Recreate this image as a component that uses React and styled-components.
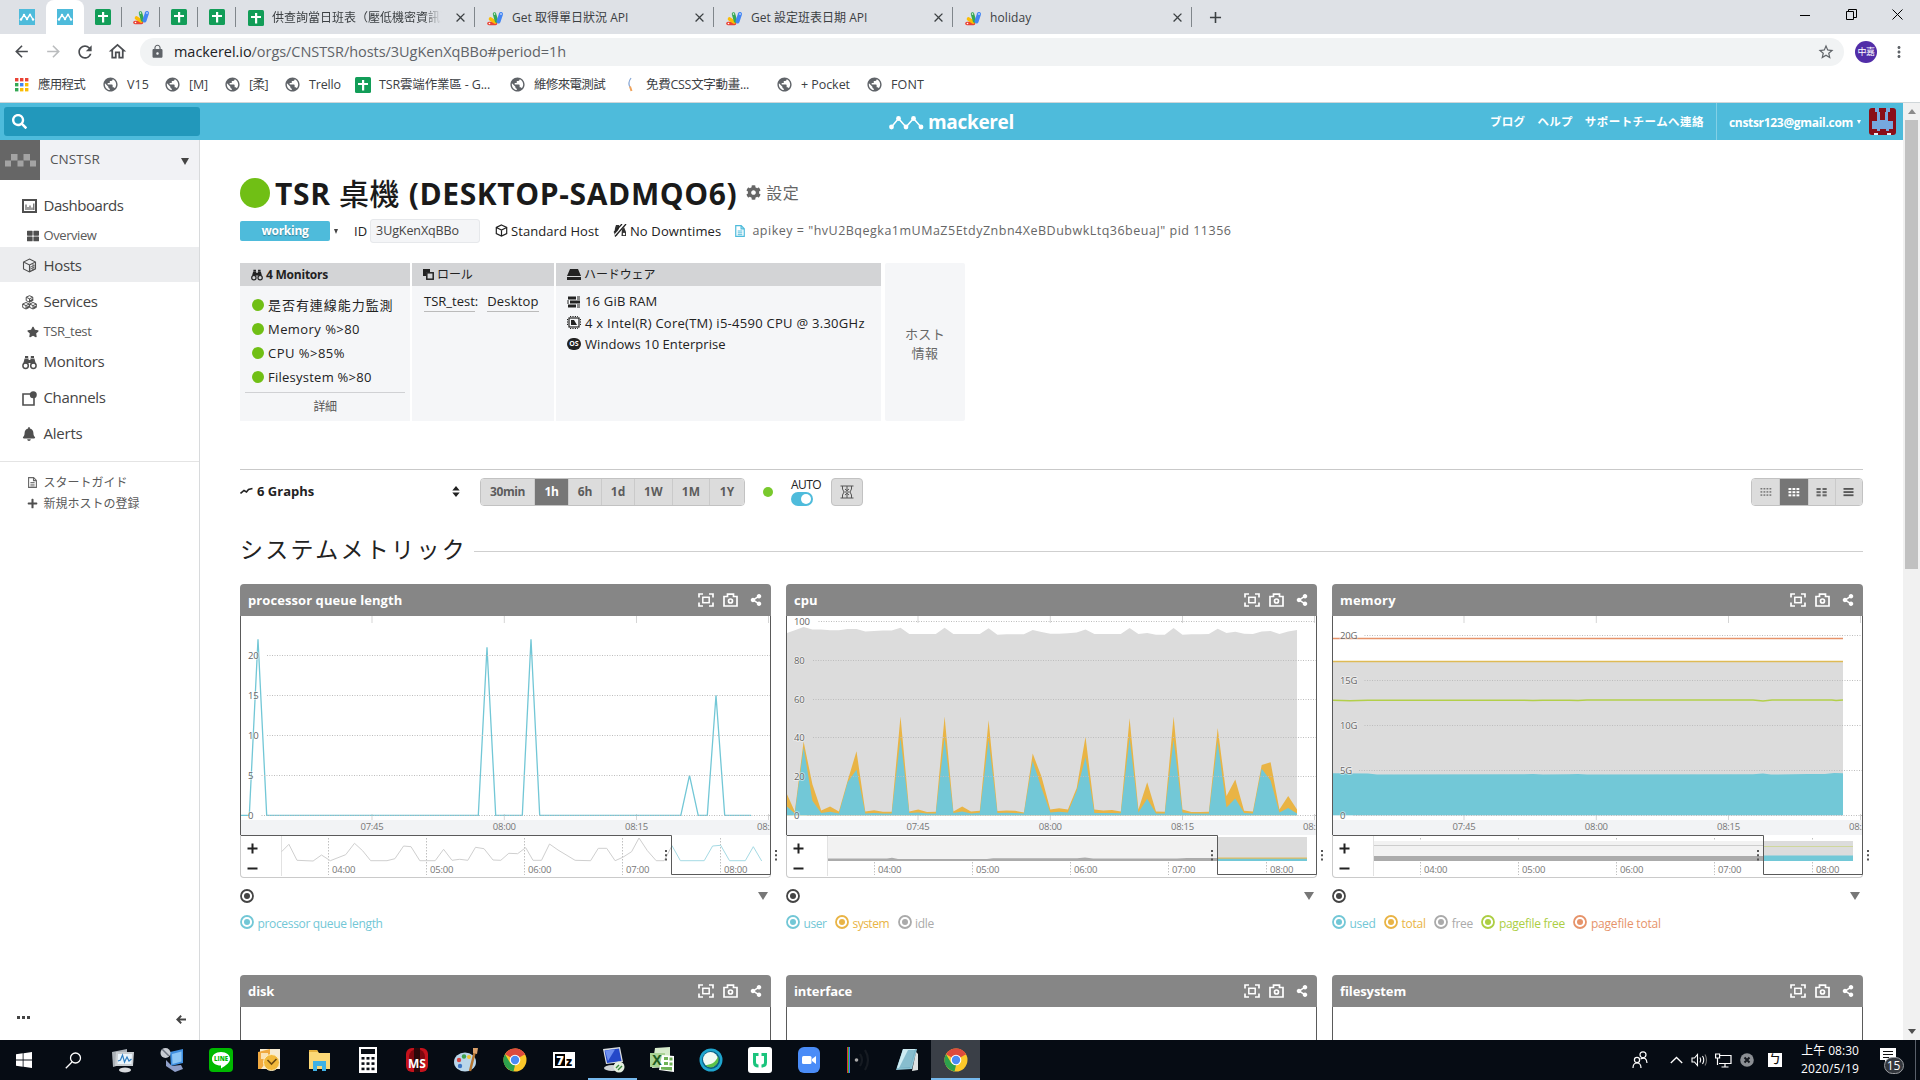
import React from "react";
import styled, { createGlobalStyle, css } from "styled-components";
import {
  MdPublic, MdArrowBack, MdArrowForward, MdRefresh, MdOutlineHome, MdLock,
  MdStarBorder, MdMoreVert, MdClose, MdAdd,
} from "react-icons/md";
import {
  FaCog, FaPlus, FaStar, FaBell, FaThLarge, FaShareAlt, FaSearch,
} from "react-icons/fa";

const Global = createGlobalStyle`
  * { box-sizing: border-box; }
  html, body { margin: 0; padding: 0; background: #fff; overflow: hidden; }
  body { font-family: "Open Sans", "Noto Sans CJK TC", sans-serif; font-size: 13px; color: #222; }
  svg { display: block; flex: none; }
`;

const Screen = styled.div`
  width: 1920px;
  height: 1080px;
  display: flex;
  flex-direction: column;
  overflow: hidden;
`;

const Text = styled.span`
  font-size: ${(p) => p.$size || 13}px;
  font-weight: ${(p) => p.$weight || 400};
  letter-spacing: ${(p) => p.$track || 0}px;
  color: ${(p) => p.$color || "inherit"};
  line-height: 1.3;
  white-space: nowrap;
`;

/* ---------- browser chrome ---------- */

const TabStrip = styled.div`
  height: 34px;
  flex: none;
  display: flex;
  background: #dee1e6;
  padding-left: 8px;
`;

const PinnedTab = styled.div`
  width: 38px;
  height: 34px;
  display: flex;
  align-items: center;
  justify-content: center;
  background: ${(p) => (p.$active ? "#fff" : "transparent")};
  border-radius: ${(p) => (p.$active ? "8px 8px 0 0" : 0)};
`;

const Divider = styled.span`
  width: 1px;
  height: 20px;
  margin: 7px 0 0 -1px;
  background: #80868b;
`;

const WideTab = styled.div`
  width: 239px;
  height: 34px;
  display: flex;
  align-items: center;
  padding: 1px 7px 0 12px;
  gap: 8px;
  color: #3c4043;
`;

const TabTitle = styled(Text)`
  flex: 1;
  overflow: hidden;
  ${(p) => p.$fade && css`
    mask-image: linear-gradient(90deg, #000 88%, transparent 98%);
  `}
`;

const NewTab = styled.div`
  width: 46px;
  display: flex;
  align-items: center;
  justify-content: center;
  color: #3c4043;
`;

const WindowButtons = styled.div`
  margin-left: auto;
  display: flex;
  height: 29px;
  align-items: center;
`;

const WindowButton = styled.div`
  width: 46px;
  display: flex;
  justify-content: center;
`;

const AddressBar = styled.div`
  height: 35px;
  flex: none;
  display: flex;
  align-items: center;
  padding-left: 5px;
  background: #fff;
  color: #5f6368;
`;

const NavButton = styled.div`
  width: 32px;
  display: flex;
  justify-content: center;
  color: ${(p) => (p.$dim ? "#babcbe" : "#4a4d51")};
`;

const Omnibox = styled.div`
  flex: 1;
  height: 28px;
  margin-left: 7px;
  padding: 0 9px 0 10px;
  display: flex;
  align-items: center;
  border-radius: 14px;
  background: #f1f3f4;
`;

const Url = styled(Text)`
  margin-left: 9px;
  padding-top: 1px;
  flex: 1;
  b { font-weight: 400; color: #202124; }
`;

const Profile = styled.div`
  width: 22px;
  height: 22px;
  margin: 0 13px 0 11px;
  border-radius: 50%;
  background: #512da8;
  color: #fff;
  display: flex;
  align-items: center;
  justify-content: center;
`;

const NavSpacer = styled.span`
  width: 12px;
`;

const Bookmarks = styled.div`
  height: 33px;
  flex: none;
  display: flex;
  align-items: center;
  padding: 0 0 2px 14px;
  background: #fff;
`;

const Bookmark = styled.div`
  width: ${(p) => p.$width}px;
  display: flex;
  align-items: center;
  gap: 8px;
  color: #3c4043;
  ${Text} { padding-top: 1px; }
`;

/* ---------- page ---------- */

const Viewport = styled.div`
  height: 938px;
  flex: none;
  display: flex;
  border-top: 1px solid #cfd6d9;
`;

const Page = styled.div`
  width: 1903px;
  display: flex;
  flex-direction: column;
`;

const ScrollTrack = styled.div`
  width: 17px;
  background: #f1f1f1;
  display: flex;
  flex-direction: column;
  align-items: center;
`;

const ScrollArrow = styled.div`
  height: 17px;
  display: flex;
  align-items: center;
`;

const ScrollThumb = styled.div`
  width: 13px;
  height: 449px;
  margin-bottom: auto;
  background: #c1c1c1;
`;

const Header = styled.header`
  height: 37px;
  flex: none;
  display: grid;
  grid-template-columns: 1fr auto 1fr;
  align-items: center;
  background: #4ebbdb;
  color: #fff;
`;

const SearchBox = styled.div`
  width: 196px;
  height: 29px;
  margin-left: 4px;
  padding-left: 8px;
  display: flex;
  align-items: center;
  border-radius: 3px;
  background: #2298bb;
`;

const Brand = styled.div`
  display: flex;
  align-items: center;
  gap: 4px;
  padding-top: 1px;
`;

const HeaderLinks = styled.div`
  height: 37px;
  display: flex;
  align-items: center;
  justify-content: flex-end;
  gap: 12px;
  padding-right: 7px;
  ${Text} { padding-top: 2px; }
`;

const Account = styled.div`
  height: 37px;
  display: flex;
  align-items: center;
  gap: 4px;
  padding-left: 12px;
  border-left: 1px solid #83d0e6;
`;

const Avatar = styled.div`
  margin-left: 4px;
  border-radius: 3px;
  overflow: hidden;
`;

const Body = styled.div`
  flex: 1;
  display: flex;
  min-height: 0;
`;

const Sidebar = styled.nav`
  width: 200px;
  flex: none;
  display: flex;
  flex-direction: column;
  border-right: 1px solid #d8dadc;
  color: #444;
`;

const OrgRow = styled.div`
  height: 40px;
  flex: none;
  display: flex;
  align-items: center;
  gap: 10px;
  padding-right: 10px;
  margin-bottom: 8px;
  background: #f1f2f5;
  color: #555;
`;

const OrgLogo = styled.div`
  width: 40px;
  height: 40px;
  background: #666;
  display: flex;
  align-items: center;
  justify-content: center;
`;

const Caret = styled.span`
  width: 0;
  height: 0;
  border: ${(p) => p.$w || 4}px solid transparent;
  border-top: ${(p) => p.$h || 7}px solid ${(p) => p.$color || "#444"};
  border-bottom: 0;
`;

const OrgCaret = styled(Caret)`
  margin-left: auto;
  margin-top: 3px;
`;

const NavItem = styled.div`
  height: ${(p) => p.$height || 36}px;
  flex: none;
  display: grid;
  grid-template-columns: 21.5px 1fr;
  align-items: center;
  padding-left: 22px;
  padding-top: ${(p) => p.$nudge || 0}px;
  background: ${(p) => (p.$active ? "#ecedef" : "transparent")};
  color: ${(p) => (p.$sub ? "#5a5a5a" : "#444")};
  > svg { color: #4f4f4f; justify-self: ${(p) => (p.$sub ? "center" : "start")}; }
`;

const NavLinks = styled.div`
  margin-top: 9px;
  padding-top: 10px;
  border-top: 1px solid #e4e4e4;
`;

const SidebarFooter = styled.div`
  margin-top: auto;
  height: 42px;
  padding: 0 13px 0 17px;
  display: flex;
  align-items: center;
  justify-content: space-between;
  color: #444;
`;

const Dots = styled.span`
  display: flex;
  gap: 2px;
  padding-bottom: 4px;
  i { width: 3px; height: 3px; background: #444; }
`;

const Main = styled.main`
  flex: 1;
  padding: 32px 40px 0 40px;
  display: flex;
  flex-direction: column;
  min-width: 0;
`;

const TitleRow = styled.div`
  height: 42px;
  flex: none;
  display: flex;
  align-items: center;
  gap: 5px;
  b { font-weight: 500; }
`;

const Status = styled.span`
  width: ${(p) => p.$size}px;
  height: ${(p) => p.$size}px;
  flex: none;
  border-radius: 50%;
  background: ${(p) => p.$color || "#70bf15"};
`;

const Settings = styled.div`
  display: flex;
  align-items: center;
  gap: 5px;
  margin-left: 4px;
  color: #666;
`;

const MetaRow = styled.div`
  height: 24px;
  flex: none;
  margin-top: 5px;
  display: flex;
  align-items: center;
`;

const Meta = styled.div`
  display: flex;
  align-items: center;
  gap: ${(p) => p.$gap || 3}px;
  margin-left: ${(p) => p.$left || 0}px;
`;

const Badge = styled.div`
  width: 90px;
  height: 20px;
  margin-right: 4px;
  display: flex;
  align-items: center;
  justify-content: center;
  border-radius: 2px;
  background: #4ebbdb;
  color: #fff;
  text-shadow: 0 1px 1px rgba(0, 0, 0, 0.3);
`;

const IdField = styled.div`
  width: 110px;
  height: 24px;
  padding-left: 5px;
  display: flex;
  align-items: center;
  border: 1px solid #e6e8eb;
  border-radius: 3px;
  background: #f4f5f7;
  color: #444;
`;

const InfoTable = styled.div`
  height: 158px;
  flex: none;
  margin-top: 20px;
  display: flex;
  gap: 2px;
`;

const InfoPanel = styled.section`
  width: ${(p) => p.$width}px;
  display: flex;
  flex-direction: column;
  background: #f5f6f8;
`;

const InfoHead = styled.div`
  height: 23px;
  flex: none;
  display: flex;
  align-items: center;
  gap: 3px;
  padding-left: 11px;
  background: #d3d4d6;
`;

const MonitorList = styled.div`
  padding: 7px 0 0 12px;
  flex: 1;
`;

const MonitorItem = styled.div`
  height: 24px;
  display: flex;
  align-items: center;
  gap: 4px;
`;

const Details = styled.div`
  height: 29px;
  margin: 0 5px;
  border-top: 1px solid #d0d1d4;
  display: flex;
  align-items: center;
  justify-content: center;
  color: #555;
`;

const Roles = styled.div`
  display: flex;
  padding: 7px 0 0 12px;
`;

const RoleLink = styled(Text)`
  height: 19px;
  border-bottom: 1px solid #bbb;
`;

const RoleColon = styled(Text)`
  margin-right: 9px;
`;

const Hardware = styled.div`
  padding: 5px 0 0 11px;
`;

const HardwareItem = styled.div`
  height: 21.3px;
  display: flex;
  align-items: center;
  gap: 4px;
`;

const HostInfo = styled.div`
  width: 80px;
  margin-left: 2px;
  padding-top: 4px;
  display: flex;
  flex-direction: column;
  align-items: center;
  justify-content: center;
  gap: 2px;
  border-radius: 2px;
  background: #f5f6f8;
  color: #666;
`;

const GraphBar = styled.div`
  height: 37px;
  flex: none;
  margin-top: 48px;
  padding-top: 7px;
  display: flex;
  align-items: center;
  border-top: 1px solid #c9c9c9;
`;

const GraphSelect = styled.div`
  width: 240px;
  display: flex;
  align-items: center;
  gap: 4px;
  padding-right: 20px;
  > :last-child { margin-left: auto; }
`;

const Group = styled.div`
  height: 28px;
  display: flex;
  border: 1px solid #c2c2c2;
  border-radius: 4px;
  overflow: hidden;
`;

const GroupButton = styled.div`
  width: ${(p) => p.$width}px;
  display: flex;
  align-items: center;
  justify-content: center;
  border-left: ${(p) => (p.$first ? 0 : "1px solid #cacaca")};
  background: ${(p) => (p.$active ? "#767676" : "#dcdcdc")};
  color: ${(p) => (p.$active ? "#fff" : "#5c5c5c")};
`;

const Auto = styled.div`
  width: 30px;
  display: flex;
  flex-direction: column;
  margin: 0 10px 0 18px;
`;

const Toggle = styled.div`
  width: 22px;
  height: 14px;
  padding: 2px;
  display: flex;
  justify-content: flex-end;
  border-radius: 7px;
  background: #4ebbdb;
  &::after { content: ""; width: 10px; height: 10px; border-radius: 50%; background: #fff; }
`;

const SquareButton = styled.div`
  width: 32px;
  height: 28px;
  display: flex;
  align-items: center;
  justify-content: center;
  border: 1px solid #c2c2c2;
  border-radius: 4px;
  background: #dcdcdc;
  margin-right: auto;
`;

const SectionTitle = styled.div`
  height: 40px;
  flex: none;
  margin-top: 24px;
  display: flex;
  align-items: center;
  gap: 7px;
  &::after { content: ""; flex: 1; height: 1px; background: #cfcfcf; margin-top: 2px; }
`;

const Cards = styled.div`
  margin-top: 14px;
  display: grid;
  grid-template-columns: repeat(3, 531px);
  column-gap: 15px;
  grid-auto-rows: 391px;
`;

const CardHead = styled.div`
  height: 32px;
  padding: 0 9px 0 8px;
  display: flex;
  align-items: center;
  border-radius: 4px 4px 0 0;
  background: #868686;
  color: #fff;
  ${Text} { flex: 1; }
`;

const HeadIcons = styled.div`
  display: flex;
  align-items: center;
  gap: 9px;
  > :last-child { margin-left: 3px; }
`;

const ChartFrame = styled.div`
  border: solid #5a5a5a;
  border-width: 0 1px;
  height: ${(p) => p.$height || 219}px;
`;

const Overview = styled.div`
  height: 43px;
  display: flex;
  border: solid #cacaca;
  border-width: 0 1px 1px;
  border-radius: 0 0 4px 4px;
`;

const ZoomButtons = styled.div`
  width: 40px;
  display: flex;
  flex-direction: column;
  padding: 7px 0 0 6px;
  gap: 8px;
  border-top: 1px solid #5a5a5a;
`;

const AllToggle = styled.div`
  height: 36px;
  padding: 0 3px 0 0;
  display: flex;
  align-items: center;
  justify-content: space-between;
`;

const Legend = styled.div`
  display: flex;
  gap: 8.5px;
  padding-top: 1px;
`;

const LegendItem = styled.div`
  display: flex;
  gap: 3.5px;
  color: ${(p) => p.$color};
  ${Text} { padding-top: 1px; }
`;

/* ---------- taskbar ---------- */

const Taskbar = styled.div`
  height: 40px;
  flex: none;
  display: flex;
  background: #060c14;
  color: #fff;
`;

const TaskSlot = styled.div`
  width: ${(p) => p.$width || 49}px;
  display: flex;
  align-items: center;
  justify-content: center;
  background: ${(p) => (p.$active ? "#3a3f47" : "transparent")};
  box-shadow: ${(p) => (p.$running ? "inset 0 -2px 0 #76b9ed" : "none")};
`;

const Tray = styled.div`
  margin-left: auto;
  display: flex;
  align-items: center;
`;

const TrayItem = styled.div`
  width: ${(p) => p.$width}px;
  display: flex;
  align-items: center;
  justify-content: center;
`;

const Clock = styled.div`
  width: 76px;
  display: flex;
  flex-direction: column;
  align-items: center;
  gap: 2px;
`;

const PeekLine = styled.div`
  width: 5px;
  height: 40px;
  border-left: 1px solid #59606a;
`;

const ImeBadge = styled.span`
  width: 14px;
  height: 14px;
  background: #fff;
  color: #111;
  font-size: 12px;
  font-weight: 500;
  line-height: 14px;
  text-align: center;
`;

const Notice = styled.div`
  position: relative;
  width: 26px;
  height: 26px;
  padding: 1px 0 0 1px;
`;

const Count = styled.span`
  position: absolute;
  left: 5px;
  top: 10px;
  width: 20px;
  height: 17px;
  border: 1px solid #9a9da1;
  border-radius: 9px;
  background: #33373d;
  font-size: 12px;
  line-height: 15px;
  text-align: center;
`;

/* ---------- icons ---------- */

const MackerelFav = () => (
  <svg width="16" height="16" viewBox="0 0 16 16">
    <rect width="16" height="16" fill="#4ebbdb" />
    <path d="M2 10.500 5 6l3 4 3-4.500 3 5" fill="none" stroke="#fff" strokeWidth="1.400" />
    <g fill="#fff"><circle cx="2" cy="10.500" r="1.200" /><circle cx="5" cy="6" r="1.200" /><circle cx="8" cy="10" r="1.200" /><circle cx="11" cy="6" r="1.200" /><circle cx="14" cy="10.500" r="1.200" /></g>
  </svg>
);

const SheetFav = () => (
  <svg width="16" height="16" viewBox="0 0 16 16">
    <rect width="16" height="16" rx="1.500" fill="#129d58" />
    <path d="M7 3h2.200v3H13v2H9.200v5.500H7V8H3V6h4z" fill="#fff" />
  </svg>
);

const ScriptFav = () => (
  <svg width="17" height="16" viewBox="0 0 17 16">
    <path d="M2 13.500H8.500" stroke="#ea4335" strokeWidth="3.600" strokeLinecap="round" />
    <path d="M3.500 9 8 12" stroke="#fbbc04" strokeWidth="3.600" strokeLinecap="round" />
    <path d="M7.500 4 9.500 11" stroke="#34a853" strokeWidth="3.400" strokeLinecap="round" />
    <path d="M14 4 11.500 11.500" stroke="#4285f4" strokeWidth="4" strokeLinecap="round" />
    <circle cx="7.500" cy="4" r=".8" fill="#fff" /><circle cx="14" cy="4" r=".8" fill="#fff" /><circle cx="2.500" cy="13.500" r=".8" fill="#fff" />
  </svg>
);

const appColors = ["#ea4335", "#ea4335", "#ea4335", "#34a853", "#4285f4", "#fbbc04", "#34a853", "#fbbc04", "#fbbc04"];
const AppsIcon = () => (
  <svg width="16" height="16" viewBox="0 0 16 16">
    {appColors.map((c, i) => (
      <rect key={i} x={1 + (i % 3) * 5} y={1 + Math.floor(i / 3) * 5} width="3.400" height="3.400" fill={c} />
    ))}
  </svg>
);

const FeatherFav = () => (
  <svg width="16" height="16" viewBox="0 0 16 16">
    <path d="M9 1 Q5.500 6 8 10" fill="none" stroke="#8aa9d6" strokeWidth="1.300" />
    <path d="M8 9.500 9.500 14" stroke="#f0a35a" strokeWidth="2" />
  </svg>
);

const Identicon = () => (
  <svg width="27" height="27" viewBox="0 0 27 27">
    <rect width="27" height="27" fill="#8a0f18" />
    <path d="M6 0h4v4h1v8h5V4h1V0h4v4h-2v9h5v8h-4v2h-3v-2h-6v2H8v-2H3v-8h5V4H6z" fill="#76a8de" />
    <path d="M5 25h4v2H5zM18 25h4v2h-4z" fill="#e8eef5" />
  </svg>
);

const BrandMark = () => (
  <svg width="35" height="16" viewBox="0 0 35 16">
    <path d="M2.500 13 9.500 4.500 17 13 24.500 4.500 32 13" fill="none" stroke="#fff" strokeWidth="1.500" />
    <g fill="#fff"><circle cx="2.500" cy="13" r="2.400" /><circle cx="9.500" cy="4.500" r="2.400" /><circle cx="17" cy="13" r="2.400" /><circle cx="24.500" cy="4.500" r="2.400" /><circle cx="32" cy="13" r="2.400" /></g>
  </svg>
);

const OrgMark = () => (
  <svg width="31" height="13" viewBox="0 0 31 13" fill="#a3a3a3">
    <rect x="0" y="6.500" width="6" height="6" /><rect x="6" y="0" width="6.500" height="6.500" />
    <rect x="12.500" y="6.500" width="6" height="6" /><rect x="18.500" y="0" width="6.500" height="6.500" />
    <rect x="25" y="6.500" width="6" height="6" />
  </svg>
);

const DashboardIcon = () => (
  <svg width="15" height="14" viewBox="0 0 15 14">
    <path d="M1 1h13v12H1z" fill="none" stroke="currentColor" strokeWidth="2" />
    <path d="M4 11V5.500M6 11V8M8 11V6.500M10 11V8.500M11.800 11V4.500" stroke="currentColor" strokeWidth="1.100" />
  </svg>
);

const HostIcon = () => (
  <svg width="15" height="15" viewBox="0 0 15 15" fill="none" stroke="currentColor">
    <path d="M7.500 1 13.500 4v7l-6 3-6-3V4zM1.500 4l6 3 6-3M7.500 7v7" strokeWidth="1.100" />
    <path d="M8 9.300 13 7M8 11.200 13 8.800M8 13 13 10.700M11 6v6.500" strokeWidth=".8" />
  </svg>
);

const CubeIcon = () => (
  <svg width="13" height="13" viewBox="0 0 13 13" fill="none" stroke="currentColor" strokeWidth="1.200">
    <path d="M6.500 1 11.700 3.500v6L6.500 12 1.300 9.500v-6zM1.300 3.500 6.500 6l5.200-2.500M6.500 6v6" />
  </svg>
);

const cube = (x, y) => `M${x} ${y}l3.300 1.500v3.400l-3.300 1.600-3.300-1.600v-3.400zM${x - 3.3} ${y + 1.5}l3.300 1.600 3.300-1.600M${x} ${y + 3.1}v3.400`;
const ServicesIcon = () => (
  <svg width="15" height="15" viewBox="0 0 15 15" fill="none" stroke="currentColor" strokeWidth="1">
    <path d={cube(7.5, 0.7) + cube(4, 7.5) + cube(11, 7.5)} />
    <path d="M8 6l3-1.500M4.500 12.800 7 11.500M11.500 12.800 14 11.500" strokeWidth="1.600" />
  </svg>
);

const BinocularIcon = ({ size = 15 }) => (
  <svg width={size} height={size} viewBox="0 0 15 15">
    <path d="M3 1h3.200v2H3zM8.800 1H12v2H8.800zM2.600 3.500h4v5H1.300zM8.400 3.500h4l1.300 5H8.400zM6 5h3v3H6z" fill="currentColor" />
    <circle cx="3.600" cy="10.800" r="2.700" fill="none" stroke="currentColor" strokeWidth="1.500" />
    <circle cx="11.400" cy="10.800" r="2.700" fill="none" stroke="currentColor" strokeWidth="1.500" />
  </svg>
);

const ChannelIcon = () => (
  <svg width="15" height="15" viewBox="0 0 15 15">
    <path d="M1 3h11v11H1z" fill="none" stroke="currentColor" strokeWidth="1.600" />
    <circle cx="11.300" cy="3.700" r="3.500" fill="currentColor" />
  </svg>
);

const BackArrow = () => (
  <svg width="10" height="9" viewBox="0 0 10 9">
    <path d="M10 4.500H2.500M5.200.700 1.300 4.500l3.900 3.800" fill="none" stroke="currentColor" strokeWidth="1.900" />
  </svg>
);

const DocIcon = ({ color = "#666", w = 9, h = 11 }) => (
  <svg width={w} height={h} viewBox="0 0 9 11" fill="none" stroke={color}>
    <path d="M.6.600h5l2.800 2.800v7H.6zM5.500.600v3h3" strokeWidth="1.100" />
    <path d="M2.400 5.500h4.200M2.400 7.200h4.200M2.400 8.900h4.200" strokeWidth=".9" />
  </svg>
);

const NoDowntimeIcon = () => (
  <svg width="14" height="13" viewBox="0 0 14 13">
    <path d="M3 1h3v3l-2 8H1L2 4zM9 3h2l2 5v4H8.500z" fill="#333" />
    <circle cx="11" cy="10" r="1.200" fill="#fff" />
    <path d="M12.500 0 1.500 12" stroke="#fff" strokeWidth="2.400" />
    <path d="M13 0 2 12.500M9 0 1 8.500" stroke="#222" strokeWidth="1.300" />
  </svg>
);

const RoleIcon = () => (
  <svg width="11" height="11" viewBox="0 0 11 11">
    <path d="M0 0h7v3H3v4H0z" fill="#222" />
    <rect x="3.800" y="3.800" width="6.400" height="6.400" fill="none" stroke="#222" strokeWidth="1.500" />
  </svg>
);

const DriveIcon = () => (
  <svg width="14" height="11" viewBox="0 0 14 11">
    <path d="M3 0h8l3 7H0zM0 8h14v3H0z" fill="#222" />
  </svg>
);

const RamIcon = () => (
  <svg width="14" height="12" viewBox="0 0 14 12">
    <path d="M1 .500h8v3h-8zM3 4.500h10v3H3zM1 8.500h8v3h-8z" fill="#222" />
    <path d="M10 1h3M10 3h3M10 9h3M10 11h3M0 5h2M0 7h2" stroke="#222" />
  </svg>
);

const CpuIcon = () => (
  <svg width="14" height="13" viewBox="0 0 14 13">
    <rect x="2" y="2" width="10" height="9" fill="none" stroke="#222" strokeWidth="1.200" />
    <path d="M4 4h3l3 5H4z" fill="#222" />
    <path d="M3 .500h8M3 12.500h8M.500 3v7M13.500 3v7" stroke="#222" strokeDasharray="1.200 1.200" />
  </svg>
);

const OsBadge = styled.span`
  width: 14px;
  height: 12px;
  border-radius: 6px;
  background: #222;
  color: #fff;
  font-size: 7px;
  font-weight: 700;
  line-height: 12px;
  text-align: center;
`;

const WaveIcon = () => (
  <svg width="13" height="8" viewBox="0 0 13 8">
    <path d="M.500 6.500 4 3.500 6.500 5 8.500 2.500 12.500 1.500" fill="none" stroke="#222" strokeWidth="1.600" />
  </svg>
);

const SortIcon = () => (
  <svg width="8" height="11" viewBox="0 0 8 11"><path d="M4 0l3.700 4.500H.3zM4 11 .3 6.500h7.400z" fill="#222" /></svg>
);

const RangeIcon = () => (
  <svg width="14" height="14" viewBox="0 0 14 14" fill="none" stroke="#555">
    <path d="M.500 1h13M.500 13h13M2.500 1v3l1.500 3-1.500 3v3M11.500 1v3L10 7l1.500 3v3M4.500 7h5" />
    <path d="M7 1v4.500M5 4l2 1.800L9 4M7 13V8.500M5 10l2-1.800L9 10" />
  </svg>
);

const GridIcon = ({ cols, rows = 3, w, color }) => (
  <svg width="12" height="10" viewBox="0 0 12 10" fill={color}>
    {Array.from({ length: cols * rows }, (_, i) => (
      <rect key={i} x={0.5 + (i % cols) * (12 / cols)} y={1 + Math.floor(i / cols) * (9.5 / rows)} width={w} height={cols === 1 ? 1.8 : cols === 4 ? 1.5 : 2} />
    ))}
  </svg>
);

const ExpandIcon = () => (
  <svg width="16" height="14" viewBox="0 0 16 14" fill="none" stroke="#fff" strokeWidth="1.700">
    <path d="M1 4.500V1h4M11 1h4v3.500M15 9.500V13h-4M5 13H1V9.500" />
    <rect x="4.800" y="4.300" width="6.400" height="5.400" strokeWidth="1.500" />
  </svg>
);

const CameraIcon = () => (
  <svg width="15" height="14" viewBox="0 0 15 14" fill="none" stroke="#fff" strokeWidth="1.700">
    <path d="M1 3.500h3.500V1.200h6v2.300H14V13H1z" /><circle cx="7.500" cy="8" r="2" />
  </svg>
);

const Radio = ({ color }) => (
  <svg width="14" height="14" viewBox="0 0 14 14">
    <circle cx="7" cy="7" r="6" fill="none" stroke={color} strokeWidth="1.800" />
    <circle cx="7" cy="7" r="3" fill={color} />
  </svg>
);

const CardTools = () => (
  <HeadIcons><ExpandIcon /><CameraIcon /><FaShareAlt size={12} /></HeadIcons>
);

const NoteGlyph = () => (
  <svg width="16" height="16"><path d="M0 0h16v12h-7l-4 4v-4H0z" fill="#fff" /><path d="M3 3.500h10M3 6.500h10M3 9.500h6" stroke="#111" /></svg>
);

/* ---------- charts ---------- */

const W = 529;
const minute = 8.81;
const timeTicks = [["07:45", 131], ["08:00", 263.3], ["08:15", 395.5], ["08:30", 527.5]];
const pts = (list) => list.map(([x, y]) => `${x.toFixed(1)},${y.toFixed(1)}`).join(" ");

function MainChart({ labels, children }) {
  return (
    <ChartFrame>
      <svg width={W} height="219" fontSize="9.5" fontFamily="Open Sans, sans-serif">
        {timeTicks.map(([t, x]) => (
          <path key={t} d={`M${x} 0v7M${x} 198v6`} stroke="#d5d5d5" />
        ))}
        {children}
        {labels.map(([t, y]) => (
          <g key={t}>
            <line x1={13 + t.length * 5.5 + 2} x2={W} y1={y} y2={y} stroke="#bdbdbd" strokeDasharray="1 1.500" />
            <text x="7" y={y + 3} letterSpacing="-.2" fill="#666" stroke="#fff" strokeOpacity=".55" strokeWidth="1.500" paintOrder="stroke">{t}</text>
          </g>
        ))}
        <rect x="0" y="204" width={W} height="15" fill="#f2f3f5" />
        {timeTicks.map(([t, x]) => (
          <text key={t} x={x} y="214" textAnchor="middle" letterSpacing="-.25" fill="#777">{t}</text>
        ))}
      </svg>
    </ChartFrame>
  );
}

const hourTicks = [["04:00", 47.5], ["05:00", 145.5], ["06:00", 243.5], ["07:00", 341.5], ["08:00", 439.5]];

const OverviewSvg = styled.svg`
  overflow: visible;
`;

function OverviewChart({ children, tickFrom = 3 }) {
  return (
    <Overview>
      <ZoomButtons>
        <svg width="11" height="11" viewBox="0 0 11 11"><path d="M5.500.500v10M.500 5.500h10" stroke="#222" strokeWidth="2" /></svg>
        <svg width="11" height="11" viewBox="0 0 11 11"><path d="M.500 6.500h10" stroke="#222" strokeWidth="2" /></svg>
      </ZoomButtons>
      <OverviewSvg width="489" height="42" fontSize="9.5" fontFamily="Open Sans, sans-serif">
        <path d="M.500 1v40" stroke="#e2e2e2" />
        {hourTicks.map(([t, x]) => (
          <path key={t} d={`M${x} ${tickFrom}V40`} stroke="#c0c0c0" strokeDasharray="1.500 1.500" />
        ))}
        {children}
        {hourTicks.map(([t, x]) => (
          <text key={t} x={x + 3.5} y="37.5" letterSpacing="-.2" fill="#777">{t}</text>
        ))}
        <path d="M0 .500H390.500V39.500H489.500V0" fill="none" stroke="#5a5a5a" />
        <path d="M385 15v12M495 15v12" stroke="#555" strokeWidth="2" strokeDasharray="2 2.200" />
      </OverviewSvg>
    </Overview>
  );
}

const queueSpikes = [[17, 22], [246, 21], [290, 22], [448.5, 5], [475, 15]];
const queueLine = [
  [0, 199.3],
  ...queueSpikes.flatMap(([x, v]) => [[x - 8.7, 199.3], [x, 199.3 - v * 8], [x + 8.7, 199.3]]),
  [510, 199.3],
];

const sparkPast = [
  [0.6, 16.7], [7.9, 9.3], [16, 25.3], [32.1, 26], [40.5, 20], [49.3, 25.7], [64.7, 19.7], [73.5, 8.3], [81.6, 15.7],
  [89.7, 25.7], [106, 25.7], [113.9, 23.7], [122.6, 11], [130, 11.7], [138.8, 25.7], [154.2, 25.7], [162.6, 14.3],
  [171, 25.3], [178.7, 24.3], [186.8, 25.3], [194.5, 12.3], [203, 13.7], [212, 25], [219.8, 25.3], [227.8, 18.3],
  [236.6, 18.7], [244.7, 12.7], [252, 25.3], [260.5, 25.3], [268.5, 9], [277, 15], [294.1, 25.3], [309.6, 25.7],
  [317.3, 13.3], [325.7, 13.3], [334.1, 25.7], [341.8, 22.3], [350.6, 16.7], [358, 3], [366.4, 15.7], [375.2, 25.7],
  [383.2, 25.7], [391, 10.7],
];
const sparkNow = [
  [391, 10.7], [399.4, 25.7], [423.2, 25.7], [431.6, 11], [439.7, 10.3], [448.5, 25.7], [464.3, 25.7], [472.3, 11.7], [480.7, 26],
];

const cpuUser = [5, 1, 35, 7.5, 1.2, 1.8, 1, 17, 23.5, 1, 1.2, 1, 1, 40, 1.2, 1.5, 1, 1, 40, 1.2, 2, 1, 1.3, 39, 1.2, 1.3, 1.2, 1, 28, 14, 1.5, 1.8, 1.5, 12.5, 30, 1.2, 1.2, 1.2, 1.1, 40, 1.5, 8.5, 1, 1, 39, 1.5, 1, 1, 1, 38, 4, 8.7, 1.2, 1, 24, 18, 1.5, 3.7, 1];
const cpuSystem = [12, 2, 38, 16, 2.4, 4.5, 2, 18, 33, 2, 2.6, 1.8, 1.8, 51, 2, 3, 1.7, 1.8, 51, 2, 4.5, 2, 2.3, 49, 2.2, 2.4, 2.3, 1.5, 31.8, 20, 3, 3.6, 3, 14, 40.5, 3, 2.5, 2.7, 2, 50, 3, 17, 2, 1.8, 51, 3, 1.7, 1.7, 1.8, 45, 10, 18.5, 2.3, 2, 26, 27.3, 3, 10, 3];
const cpuIdle = [93.8, 95.4, 97.1, 95.7, 95.7, 95.4, 95.4, 96, 96.1, 94.8, 95, 95.2, 95.2, 96.7, 93.5, 93.5, 93.5, 93.5, 96.7, 93.5, 93.5, 93.5, 93.5, 96.4, 93.1, 93.3, 93.3, 93.3, 95.5, 94.5, 93.6, 93.6, 93.8, 94.3, 95.7, 93.5, 93.5, 93.5, 93.5, 96.6, 93.5, 94, 93.1, 93.1, 96.5, 93.1, 93.3, 93.3, 93.5, 96.2, 94, 94.6, 93.6, 93.5, 94.8, 95, 93.5, 94.7, 95.5];
const cpuArea = (vals) => pts([[-1, 199.3], ...vals.map((v, i) => [i * minute - 1, 199.3 - v * 1.94]), [58 * minute - 1, 199.3]]);

const charts = [
  {
    title: "processor queue length",
    track: 0.08,
    main: (
      <MainChart labels={[["20", 39.5], ["15", 79.5], ["10", 119.5], ["5", 159.5], ["0", 199.5]]}>
        <polyline points={pts(queueLine)} fill="none" stroke="#72c7d6" strokeWidth="1.300" />
      </MainChart>
    ),
    overview: (
      <OverviewChart>
        <polyline points={pts(sparkPast)} fill="none" stroke="#cfcfcf" />
        <polyline points={pts(sparkNow)} fill="none" stroke="#a5dae4" />
      </OverviewChart>
    ),
    legend: [["processor queue length", "#72c7d6", -0.34]],
  },
  {
    title: "cpu",
    main: (
      <MainChart labels={[["100", 5.5], ["80", 44.5], ["60", 83.5], ["40", 121.5], ["20", 160.5], ["0", 199.5]]}>
        <polygon points={cpuArea(cpuIdle)} fill="#dcdcdc" />
        <polygon points={cpuArea(cpuSystem)} fill="#e9b445" />
        <polygon points={cpuArea(cpuUser)} fill="#72c8d7" />
      </MainChart>
    ),
    overview: (
      <OverviewChart tickFrom={27}>
        <rect x="1" y="2" width="389" height="24" fill="#f2f2f2" />
        <path d="M1 23.500H60l5-.800 6 1.300H160l6-.800H250l8-.600 8 .900H350l10-.600H390V26H1z" fill="#ababab" />
        <rect x="390" y="2" width="90" height="24" fill="#dcdcdc" />
        <path d="M390 22.500H480V26H390z" fill="#e0bc62" />
        <path d="M390 23.700H480V26H390z" fill="#72c8d7" />
      </OverviewChart>
    ),
    legend: [["user", "#72c7d6", -0.45], ["system", "#e9b445", -0.5], ["idle", "#aaaaaa", -0.3]],
  },
  {
    title: "memory",
    track: 0.2,
    main: (
      <MainChart labels={[["20G", 19.5], ["15G", 64.5], ["10G", 109.5], ["5G", 154.5], ["0", 199.5]]}>
        <rect x="0" y="45" width="510" height="154.300" fill="#dcdcdc" />
        <polygon points="0,157.3 35,157.6 44,158.6 190,158.300 200,158 210,158.500 236,158.300 245,157.900 254,158.500 420,158.300 430,157.600 438,158.500 475,158 492,158 501,157 510,157.300 510,199.3 0,199.3" fill="#72c8d7" />
        <path d="M0 22.500H510" stroke="#e6936a" strokeWidth="1.300" />
        <path d="M0 45.500H510" stroke="#deba55" strokeWidth="1.500" />
        <path d="M0 84.300 17 84.800 35 84.200H190l10 .400 10-.400h26l9 .400 9-.600H420l10 1 9-.900h60l4 .500 7-.500" fill="none" stroke="#b3cf4a" strokeWidth="1.500" />
      </MainChart>
    ),
    overview: (
      <OverviewChart>
        <rect x="1" y="6" width="389" height="20" fill="#f2f2f2" />
        <path d="M1 10.500H390" stroke="#cdcdcd" />
        <rect x="1" y="21" width="389" height="5" fill="#ababab" />
        <rect x="390" y="6" width="90" height="20" fill="#dcdcdc" />
        <path d="M390 11.500H480" stroke="#cfd79b" />
        <rect x="390" y="20.500" width="90" height="5.500" fill="#72c8d7" />
      </OverviewChart>
    ),
    legend: [["used", "#72c7d6", -0.3], ["total", "#e9b445", -0.25], ["free", "#aaaaaa", -0.3], ["pagefile free", "#acce43", -0.28], ["pagefile total", "#e6936a", -0.2]],
  },
];

/* ---------- taskbar drawings ---------- */

const Chrome = () => (
  <svg width="24" height="24" viewBox="0 0 24 24">
    <circle cx="12" cy="12" r="11.500" fill="#fbc829" />
    <path d="M12 12 2 6.200A11.500 11.500 0 0 1 22 6.200z" fill="#dd4b3e" />
    <path d="M12 .500a11.500 11.500 0 0 1 10 6H12z" fill="#dd4b3e" />
    <path d="M2 6.200 7.200 15 12 17.200 10.500 23.400A11.500 11.500 0 0 1 2 6.200z" fill="#2da14c" />
    <circle cx="12" cy="12" r="5.300" fill="#fff" /><circle cx="12" cy="12" r="4.200" fill="#4b8bf5" />
  </svg>
);

const art = {
  perf: (
    <><path d="M2 5l15-3v14l-14 4z" fill="#aab1b7" /><path d="M6 5h18l-1 14H5z" fill="#c9ced2" /><path d="M8 7h14l-.5 10H7.500z" fill="#eaf4fb" /><path d="M8 14 10.500 13 12.500 8 14.500 15 17 10 19 14 21.500 12" fill="none" stroke="#2f7fc2" strokeWidth="1.200" /><ellipse cx="15" cy="23" rx="6" ry="2.500" fill="#d7dadd" /></>
  ),
  remote: (
    <><path d="M11 5 24 2v14l-12 3z" fill="#3f8fe0" /><path d="M13 7 22.500 4.500v10L13.500 17z" fill="#8cc6f5" /><circle cx="6.500" cy="6" r="5" fill="#c8ccd2" /><path d="M3 2l7 7" stroke="#6e7580" strokeWidth="1.500" /><path d="M7 13l6 6 9-1 2 4-8 3-9-6z" fill="#8f9fc9" /></>
  ),
  outlook: (
    <><path d="M3 2h20v20H3z" fill="#f7ecd2" /><path d="M1 5l12-3v8L4 22H1z" fill="#f0a940" /><path d="M4 6h7v6H4z" fill="#fbe3b4" /><circle cx="14.500" cy="15.500" r="8" fill="#f2b93b" stroke="#fff0c4" /><path d="M10.500 13l4 4 5-5" fill="none" stroke="#6d4a10" strokeWidth="1.600" /></>
  ),
  folder: (
    <><path d="M3 3h8l2 3h11v16H3z" fill="#fbd876" /><path d="M3 3h8l1 2H3z" fill="#e6b23e" /><path d="M7 24V14h13v10h-4v-5h-5v5z" fill="#3fb1e4" /></>
  ),
  calc: (
    <><rect x="4" y="0" width="18" height="26" fill="#fff" /><rect x="6" y="2" width="14" height="5" fill="#0a0f17" />{[0, 1, 2, 3, 4, 5, 6, 7, 8].map((i) => (<rect key={i} x={6.5 + (i % 3) * 5} y={10 + Math.floor(i / 3) * 5.3} width="3" height="2.600" fill="#0a0f17" />))}</>
  ),
  ms: (
    <><rect x="2" y="1" width="22" height="24" rx="6" fill="#c4121c" /><circle cx="13" cy="10" r="8" fill="#7d080f" /><rect x="10" y="1" width="6" height="24" fill="#2a0709" /><text x="13" y="20.500" textAnchor="middle" fontSize="12" fontWeight="700" fill="#fff">MS</text></>
  ),
  paint: (
    <><ellipse cx="12" cy="15" rx="11" ry="9.500" fill="#b9d6ea" /><circle cx="6" cy="13" r="2.200" fill="#d64541" /><circle cx="11" cy="9.500" r="2.200" fill="#3fa34d" /><circle cx="16" cy="10" r="2" fill="#f2c430" /><circle cx="7" cy="19" r="2.200" fill="#3a74c4" /><path d="M22 4 17 24" stroke="#b5752f" strokeWidth="2.400" /><path d="M20 1l5 0-1 6-4-1z" fill="#d9a06a" /></>
  ),
  pc: (
    <><path d="M3 2l17-2 3 15-17 2z" fill="#d9dde2" /><path d="M4.500 3.500 19 1.500 21.500 14 7 16z" fill="#2448c9" /><path d="M5 3.500 15 2.500 8 14z" fill="#6d8ff0" /><ellipse cx="12" cy="21" rx="8" ry="3" fill="#cfd3d6" /><circle cx="19" cy="20" r="5.500" fill="#e5efe0" /><path d="M16 21l3-3M18 23l4-4" stroke="#3a8a3a" strokeWidth="1.400" /></>
  ),
  excel: (
    <><path d="M6 1l15-1v20l-18 1z" fill="#d6ebcb" /><path d="M1 6h15v14H1z" fill="#a9d394" /><path d="M13 8l12 1v16l-15-2z" fill="#fff" /><path d="M15 10h4v3h-4zM20.500 10.500h3v3h-3zM15 15h4v3h-4zM20.500 15.500h3v3h-3zM12 20h11v3.500l-11-1z" fill="#6fb257" /><text x="8" y="18" textAnchor="middle" fontSize="14" fontWeight="700" fill="#1e5c20">X</text></>
  ),
  webex: (
    <><circle cx="13" cy="13" r="11.500" fill="#1fa6cf" /><circle cx="13" cy="13" r="9" fill="#0b5f84" /><circle cx="12.500" cy="12.500" r="7.500" fill="#f1faf3" /><path d="M20 9a8 8.500 0 0 1-13 9c5 0 11-2 13-9z" fill="#5cc14a" /></>
  ),
  pair: (
    <><rect x="1" y="0" width="24" height="26" rx="3" fill="#fff" /><path d="M11.500 7.500H7.500v8q0 3.500 4 3.500M14.500 7.500h4v8q0 3.500-4 3.500" fill="none" stroke="#1bc47d" strokeWidth="3" /></>
  ),
  zoom: (
    <><rect x="2" y="0" width="22" height="26" rx="6" fill="#4a8cf7" /><rect x="6" y="9" width="9.500" height="8" rx="1.500" fill="#fff" /><path d="M16 12l4-3v8l-4-3z" fill="#fff" /></>
  ),
  sound: (
    <><path d="M2.500 0v26" stroke="#d33" /><path d="M3.500 0v26" stroke="#3b3" /><path d="M4.500 0v26" stroke="#46f" /><circle cx="11.500" cy="13" r="1.800" fill="#aaa" /><path d="M15 7q4 6 0 12M20 3q6 10 0 20" fill="none" stroke="#161b22" strokeWidth="2.200" /></>
  ),
  note: (
    <><path d="M9 2h14l-5 20-16 1z" fill="#8cc3d4" /><path d="M9 2h12l-5 18-13 1z" fill="#cdebf2" /><path d="M14 3h8l-6 18H5z" fill="#6aaabf" opacity=".7" /><path d="M22 5l2 2v16l-6 1z" fill="#dfe3e3" /></>
  ),
};

const Art = ({ name }) => (
  <svg width="26" height="26" viewBox="0 0 26 26" fontFamily="Open Sans, sans-serif">{art[name]}</svg>
);

const LineIcon = () => (
  <svg width="24" height="24" viewBox="0 0 24 24" fontFamily="Open Sans, sans-serif">
    <rect width="24" height="24" rx="4" fill="#00b900" />
    <path d="M12 4c5.500 0 9 3 9 7 0 3.500-4 6.500-9 9.500v-3C6.500 17.500 3 15 3 11s3.500-7 9-7z" fill="#fff" />
    <text x="12" y="13.300" textAnchor="middle" fontSize="6" fontWeight="800" fill="#00b900">LINE</text>
  </svg>
);

const SevenZip = () => (
  <svg width="22" height="16" viewBox="0 0 22 16" fontFamily="Open Sans, sans-serif" fontWeight="800">
    <rect width="22" height="16" fill="#fff" /><rect x="2" y="2" width="10" height="12" fill="#000" />
    <text x="7" y="13" textAnchor="middle" fontSize="13" fill="#fff">7</text>
    <text x="16" y="14" textAnchor="middle" fontSize="12" fill="#000">z</text>
  </svg>
);

const WindowsLogo = () => (
  <svg width="16" height="16" viewBox="0 0 16 16" fill="#fff">
    <path d="M0 2.300 6.700 1.300V7.600H0zM7.500 1.200 16 0v7.600H7.500zM0 8.400h6.700v6.300L0 13.700zM7.500 8.400H16V16l-8.500-1.200z" />
  </svg>
);

const TaskSearch = () => (
  <svg width="17" height="17" viewBox="0 0 17 17" fill="none" stroke="#fff" strokeWidth="1.300">
    <circle cx="10.500" cy="6" r="5" /><path d="M7 10 .800 16.200" />
  </svg>
);

const tasks = [
  <Art name="perf" />, <Art name="remote" />, <LineIcon />, <Art name="outlook" />, <Art name="folder" />, <Art name="calc" />,
  <Art name="ms" />, <Art name="paint" />, <Chrome />, <SevenZip />, <Art name="pc" />, <Art name="excel" />, <Art name="webex" />,
  <Art name="pair" />, <Art name="zoom" />, <Art name="sound" />, <Art name="note" />, <Chrome />,
];

const Globe = () => <MdPublic size={17} color="#5f6368" />;

const bookmarks = [
  [<AppsIcon />, "應用程式", 88, -0.75], [<Globe />, "V15", 62, 0.08],
  [<Globe />, "[M]", 60, -0.14], [<Globe />, "[柔]", 60, -0.5],
  [<Globe />, "Trello", 71, -0.14], [<SheetFav />, "TSR雲端作業區 - G...", 154, -0.16],
  [<Globe />, "維修來電測試", 113, -0.67], [<FeatherFav />, "免費CSS文字動畫...", 154, -0.29],
  [<Globe />, "+ Pocket", 90, -0.06], [<Globe />, "FONT", 80, 0.13],
];

const wideTabs = [
  [<SheetFav />, "供查詢當日班表（壓低機密資訊）", 0, true],
  [<ScriptFav />, "Get 取得單日狀況 API", 0.02],
  [<ScriptFav />, "Get 設定班表日期 API", 0.02],
  [<ScriptFav />, "holiday", 0.1],
];

const ranges = [["30min", 53, -0.41], ["1h", 34, -0.3], ["6h", 33, 0], ["1d", 33, 0], ["1W", 38, 0.27], ["1M", 37, 0.1], ["1Y", 35, 0]];

export default function App() {
  return (
    <Screen>
      <Global />
      <TabStrip>
        <PinnedTab><MackerelFav /></PinnedTab>
        <PinnedTab $active><MackerelFav /></PinnedTab>
        <PinnedTab><SheetFav /></PinnedTab><Divider />
        <PinnedTab><ScriptFav /></PinnedTab><Divider />
        <PinnedTab><SheetFav /></PinnedTab><Divider />
        <PinnedTab><SheetFav /></PinnedTab><Divider />
        {wideTabs.map(([icon, title, track, fade]) => (
          <React.Fragment key={title}>
            <WideTab>
              {icon}
              <TabTitle $size={12} $track={track} $fade={fade}>{title}</TabTitle>
              <MdClose size={15} />
            </WideTab>
            <Divider />
          </React.Fragment>
        ))}
        <NewTab><MdAdd size={19} /></NewTab>
        <WindowButtons>
          <WindowButton><svg width="10" height="10"><path d="M0 5.500h10" stroke="#000" /></svg></WindowButton>
          <WindowButton><svg width="11" height="11" fill="none" stroke="#000"><path d="M.500 2.500h7v8h-7zM2.500 2.500v-2h8v8h-3" /></svg></WindowButton>
          <WindowButton><svg width="11" height="11" stroke="#000"><path d="M.500.500l10 10M10.500.500l-10 10" /></svg></WindowButton>
        </WindowButtons>
      </TabStrip>
      <AddressBar>
        <NavButton><MdArrowBack size={19} /></NavButton>
        <NavButton $dim><MdArrowForward size={19} /></NavButton>
        <NavButton><MdRefresh size={20} /></NavButton>
        <NavButton><MdOutlineHome size={21} /></NavButton>
        <Omnibox>
          <MdLock size={15} color="#5f6368" />
          <Url $size={14.5} $track={-0.05}><b>mackerel.io</b>/orgs/CNSTSR/hosts/3UgKenXqBBo#period=1h</Url>
          <MdStarBorder size={18} />
        </Omnibox>
        <Profile><Text $size={9} $track={-0.5}>中嘉</Text></Profile>
        <MdMoreVert size={18} />
        <NavSpacer />
      </AddressBar>
      <Bookmarks>
        {bookmarks.map(([icon, label, width, track]) => (
          <Bookmark key={label} $width={width}>{icon}<Text $size={12.5} $track={track}>{label}</Text></Bookmark>
        ))}
      </Bookmarks>

      <Viewport>
        <Page>
          <Header>
            <SearchBox><FaSearch size={15} /></SearchBox>
            <Brand><BrandMark /><Text $size={19} $weight={700} $track={-0.32}>mackerel</Text></Brand>
            <HeaderLinks>
              <Text $size={11.5} $weight={700} $track={0.3}>ブログ</Text>
              <Text $size={11.5} $weight={700} $track={0.3}>ヘルプ</Text>
              <Text $size={11.5} $weight={700} $track={0.45}>サポートチームへ連絡</Text>
              <Account>
                <Text $size={12} $weight={700} $track={-0.31}>cnstsr123@gmail.com</Text>
                <Caret $w={2.5} $h={4} $color="#fff" />
                <Avatar><Identicon /></Avatar>
              </Account>
            </HeaderLinks>
          </Header>
          <Body>
            <Sidebar>
              <OrgRow>
                <OrgLogo><OrgMark /></OrgLogo>
                <Text $size={13.5} $track={0.1}>CNSTSR</Text>
                <OrgCaret />
              </OrgRow>
              <NavItem><DashboardIcon /><Text $size={15} $track={-0.46}>Dashboards</Text></NavItem>
              <NavItem $sub $height={23}><FaThLarge size={12} /><Text $size={13} $track={-0.42}>Overview</Text></NavItem>
              <NavItem $active $height={35} $nudge={2}><HostIcon /><Text $size={15} $track={-0.35}>Hosts</Text></NavItem>
              <NavItem $height={38} $nudge={2}><ServicesIcon /><Text $size={15} $track={-0.35}>Services</Text></NavItem>
              <NavItem $sub $height={23}><FaStar size={12} /><Text $size={13} $track={-0.35}>TSR_test</Text></NavItem>
              <NavItem $height={37} $nudge={1}><BinocularIcon /><Text $size={15} $track={-0.27}>Monitors</Text></NavItem>
              <NavItem><ChannelIcon /><Text $size={15} $track={-0.34}>Channels</Text></NavItem>
              <NavItem><FaBell size={14} /><Text $size={15} $track={-0.22}>Alerts</Text></NavItem>
              <NavLinks>
                <NavItem $sub $height={21}><DocIcon /><Text $size={12}>スタートガイド</Text></NavItem>
                <NavItem $sub $height={21}><FaPlus size={11} /><Text $size={12}>新規ホストの登録</Text></NavItem>
              </NavLinks>
              <SidebarFooter><Dots><i /><i /><i /></Dots><BackArrow /></SidebarFooter>
            </Sidebar>

            <Main>
              <TitleRow>
                <Status $size={30} />
                <Text $size={30} $weight={700} $track={0.62} $color="#1a1a1a">TSR <b>桌機</b> (DESKTOP-SADMQO6)</Text>
                <Settings><FaCog size={15} /><Text $size={16} $track={0.5}>設定</Text></Settings>
              </TitleRow>
              <MetaRow>
                <Badge><Text $size={12} $weight={700} $track={-0.27}>working</Text></Badge>
                <Caret $w={2.5} $h={5} />
                <Meta $left={16}><Text $size={13}>ID</Text><IdField><Text $size={12.5} $track={-0.09}>3UgKenXqBBo</Text></IdField></Meta>
                <Meta $left={15}><CubeIcon /><Text $size={13} $track={0.06}>Standard Host</Text></Meta>
                <Meta $left={14}><NoDowntimeIcon /><Text $size={13} $track={0.15}>No Downtimes</Text></Meta>
                <Meta $left={14} $gap={7}><DocIcon color="#4ebbdb" w={10} h={12} /><Text $size={12.5} $track={0.5} $color="#666">apikey = "hvU2Bqegka1mUMaZ5EtdyZnbn4XeBDubwkLtq36beuaJ" pid 11356</Text></Meta>
              </MetaRow>
              <InfoTable>
                <InfoPanel $width={170}>
                  <InfoHead><BinocularIcon size={12} /><Text $size={12} $weight={700} $track={-0.23}>4 Monitors</Text></InfoHead>
                  <MonitorList>
                    <MonitorItem><Status $size={12} /><Text $size={13} $track={0.95}>是否有連線能力監測</Text></MonitorItem>
                    <MonitorItem><Status $size={12} /><Text $size={13} $track={0.44}>{"Memory %>80"}</Text></MonitorItem>
                    <MonitorItem><Status $size={12} /><Text $size={13} $track={0.48}>{"CPU %>85%"}</Text></MonitorItem>
                    <MonitorItem><Status $size={12} /><Text $size={13} $track={0.25}>{"Filesystem %>80"}</Text></MonitorItem>
                  </MonitorList>
                  <Details><Text $size={12} $track={-0.5}>詳細</Text></Details>
                </InfoPanel>
                <InfoPanel $width={142}>
                  <InfoHead><RoleIcon /><Text $size={12} $track={-0.1}>ロール</Text></InfoHead>
                  <Roles>
                    <RoleLink $size={13}>TSR_test</RoleLink><RoleColon $size={13}>:</RoleColon>
                    <RoleLink $size={13} $track={0.2}>Desktop</RoleLink>
                  </Roles>
                </InfoPanel>
                <InfoPanel $width={325}>
                  <InfoHead><DriveIcon /><Text $size={12} $track={-0.1}>ハードウェア</Text></InfoHead>
                  <Hardware>
                    <HardwareItem><RamIcon /><Text $size={13} $track={0.18}>16 GiB RAM</Text></HardwareItem>
                    <HardwareItem><CpuIcon /><Text $size={13} $track={0.27}>4 x Intel(R) Core(TM) i5-4590 CPU @ 3.30GHz</Text></HardwareItem>
                    <HardwareItem><OsBadge>OS</OsBadge><Text $size={13} $track={0.06}>Windows 10 Enterprise</Text></HardwareItem>
                  </Hardware>
                </InfoPanel>
                <HostInfo>
                  <Text $size={13} $track={0.4}>ホスト</Text>
                  <Text $size={13} $track={0.4}>情報</Text>
                </HostInfo>
              </InfoTable>

              <GraphBar>
                <GraphSelect><WaveIcon /><Text $size={13} $weight={700}>6 Graphs</Text><SortIcon /></GraphSelect>
                <Group>
                  {ranges.map(([label, width, track], i) => (
                    <GroupButton key={label} $width={width} $first={i === 0} $active={label === "1h"}>
                      <Text $size={12} $weight={700} $track={track}>{label}</Text>
                    </GroupButton>
                  ))}
                </Group>
                <Meta $left={18}><Status $size={10} $color="#79c92d" /></Meta>
                <Auto><Text $size={12} $track={-0.57}>AUTO</Text><Toggle /></Auto>
                <SquareButton><RangeIcon /></SquareButton>
                <Group>
                  <GroupButton $width={27} $first><GridIcon cols={4} w={1.8} color="#777" /></GroupButton>
                  <GroupButton $width={29} $active><GridIcon cols={3} w={2.8} color="#fff" /></GroupButton>
                  <GroupButton $width={27}><GridIcon cols={2} w={4.2} color="#666" /></GroupButton>
                  <GroupButton $width={27}><GridIcon cols={1} w={10} color="#555" /></GroupButton>
                </Group>
              </GraphBar>

              <SectionTitle><Text $size={23} $track={2.3} $color="#222">システムメトリック</Text></SectionTitle>

              <Cards>
                {charts.map((c) => (
                  <section key={c.title}>
                    <CardHead><Text $size={13} $weight={700} $track={c.track}>{c.title}</Text><CardTools /></CardHead>
                    {c.main}
                    {c.overview}
                    <AllToggle><Radio color="#444" /><Caret $w={5} $h={8} $color="#777" /></AllToggle>
                    <Legend>
                      {c.legend.map(([name, color, track]) => (
                        <LegendItem key={name} $color={color}><Radio color={color} /><Text $size={12} $track={track}>{name}</Text></LegendItem>
                      ))}
                    </Legend>
                  </section>
                ))}
                {["disk", "interface", "filesystem"].map((title) => (
                  <section key={title}>
                    <CardHead><Text $size={13} $weight={700} $track={-0.1}>{title}</Text><CardTools /></CardHead>
                    <ChartFrame $height={60} />
                  </section>
                ))}
              </Cards>
            </Main>
          </Body>
        </Page>
        <ScrollTrack>
          <ScrollArrow><svg width="8" height="5"><path d="M4 0l4 5H0z" fill="#8a8a8a" /></svg></ScrollArrow>
          <ScrollThumb />
          <ScrollArrow><svg width="8" height="5"><path d="M4 5L0 0h8z" fill="#505050" /></svg></ScrollArrow>
        </ScrollTrack>
      </Viewport>

      <Taskbar>
        <TaskSlot $width={48}><WindowsLogo /></TaskSlot>
        <TaskSlot $width={50}><TaskSearch /></TaskSlot>
        {tasks.map((icon, i) => (
          <TaskSlot key={i} $active={i === 17} $running={i === 17 || i === 10}>{icon}</TaskSlot>
        ))}
        <Tray>
          <TrayItem $width={50}><svg width="16" height="18" fill="none" stroke="#fff" strokeWidth="1.200"><circle cx="5" cy="9" r="2.600" /><path d="M1 17q0-5 4-5t4 5" /><circle cx="11" cy="3.800" r="3" /><path d="M8.500 8q6-3 6.500 4" /></svg></TrayItem>
          <TrayItem $width={22}><svg width="13" height="8" fill="none" stroke="#fff" strokeWidth="1.300"><path d="M.800 7l5.700-5.500L12.200 7" /></svg></TrayItem>
          <TrayItem $width={24}><svg width="17" height="14" fill="none" stroke="#fff" strokeWidth="1.100"><path d="M1 5h2.500l3-3.500v11l-3-3.500H1zM9 4.500q1.500 2.500 0 5M11.500 3q2.500 4 0 8" /><path d="M14 1.500q3 5.500 0 11" stroke="#777" /></svg></TrayItem>
          <TrayItem $width={25}><svg width="17" height="15" fill="none" stroke="#fff" strokeWidth="1.200"><path d="M4.500 2.500H16v8H4M10 10.500V14M6.500 14h7" /><path d="M.600 1h4v4h-4zM2.500 5v7" /></svg></TrayItem>
          <TrayItem $width={22}><svg width="14" height="14"><circle cx="7" cy="7" r="6.800" fill="#8b8f94" /><path d="M4.500 4.500l5 5M9.500 4.500l-5 5" stroke="#15191f" strokeWidth="2" /></svg></TrayItem>
          <TrayItem $width={34}><ImeBadge>ㄅ</ImeBadge></TrayItem>
          <Clock><Text $size={12}>上午 08:30</Text><Text $size={12} $track={0.13}>2020/5/19</Text></Clock>
          <TrayItem $width={47}><Notice><NoteGlyph /><Count>15</Count></Notice></TrayItem>
          <PeekLine />
        </Tray>
      </Taskbar>
    </Screen>
  );
}
